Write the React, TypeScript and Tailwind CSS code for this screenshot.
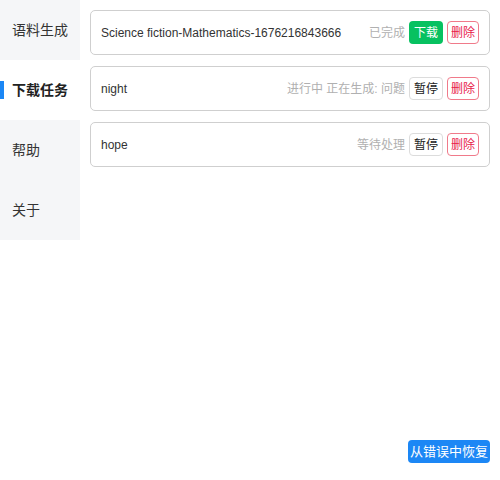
import React from "react";

const font = { fontFamily: '"Liberation Sans", "Noto Sans CJK SC", sans-serif' };

type Task = { name: string; status: string; kind: "done" | "run" | "wait" };

const tasks: Task[] = [
  { name: "Science fiction-Mathematics-1676216843666", status: "已完成", kind: "done" },
  { name: "night", status: "进行中 正在生成: 问题", kind: "run" },
  { name: "hope", status: "等待处理", kind: "wait" },
];

const nav = ["语料生成", "下载任务", "帮助", "关于"];

export default function App() {
  return (
    <div className="relative w-[500px] h-[480px] bg-white text-[#333]" style={font}>
      <div className="flex">
        <div className="w-[80px] flex flex-col">
          {nav.map((n, i) => (
            <div
              key={n}
              className={
                "relative h-[60px] flex items-center pl-[12px] text-[14px] " +
                (i === 1 ? "bg-white font-bold text-[#222]" : "bg-[#f5f6f8] text-[#333]")
              }
            >
              {i === 1 && <div className="absolute left-0 top-[21px] w-[4px] h-[18px] bg-[#1c87f5]" />}
              {n}
            </div>
          ))}
        </div>
        <div className="flex-1 pl-[10px] pr-[10px] pt-[10px] flex flex-col gap-[11px]">
          {tasks.map((t) => (
            <div
              key={t.name}
              className="h-[45px] border border-[#cfcfcf] rounded-[5px] flex items-center pl-[10px] pr-[10px]"
            >
              <span className="text-[12px] text-[#333] flex-1">{t.name}</span>
              <span className="text-[12px] text-[#b0b0b0] mr-[4px]">{t.status}</span>
              {t.kind === "done" ? (
                <button className="h-[23px] w-[34px] rounded-[4px] bg-[#07c160] text-white text-[12px] flex items-center justify-center">
                  下载
                </button>
              ) : (
                <button className="h-[23px] w-[34px] rounded-[4px] bg-white border border-[#dcdcdc] text-[#222] text-[12px] flex items-center justify-center">
                  暂停
                </button>
              )}
              <button className="ml-[4px] h-[23px] w-[32px] rounded-[4px] bg-white border border-[#f07a8a] text-[#e8204a] text-[12px] flex items-center justify-center">
                删除
              </button>
            </div>
          ))}
        </div>
      </div>
      <button className="absolute left-[408px] top-[440px] h-[23px] w-[82px] rounded-[4px] bg-[#1c87f5] text-white text-[13px] flex items-center justify-center">
        从错误中恢复
      </button>
    </div>
  );
}
